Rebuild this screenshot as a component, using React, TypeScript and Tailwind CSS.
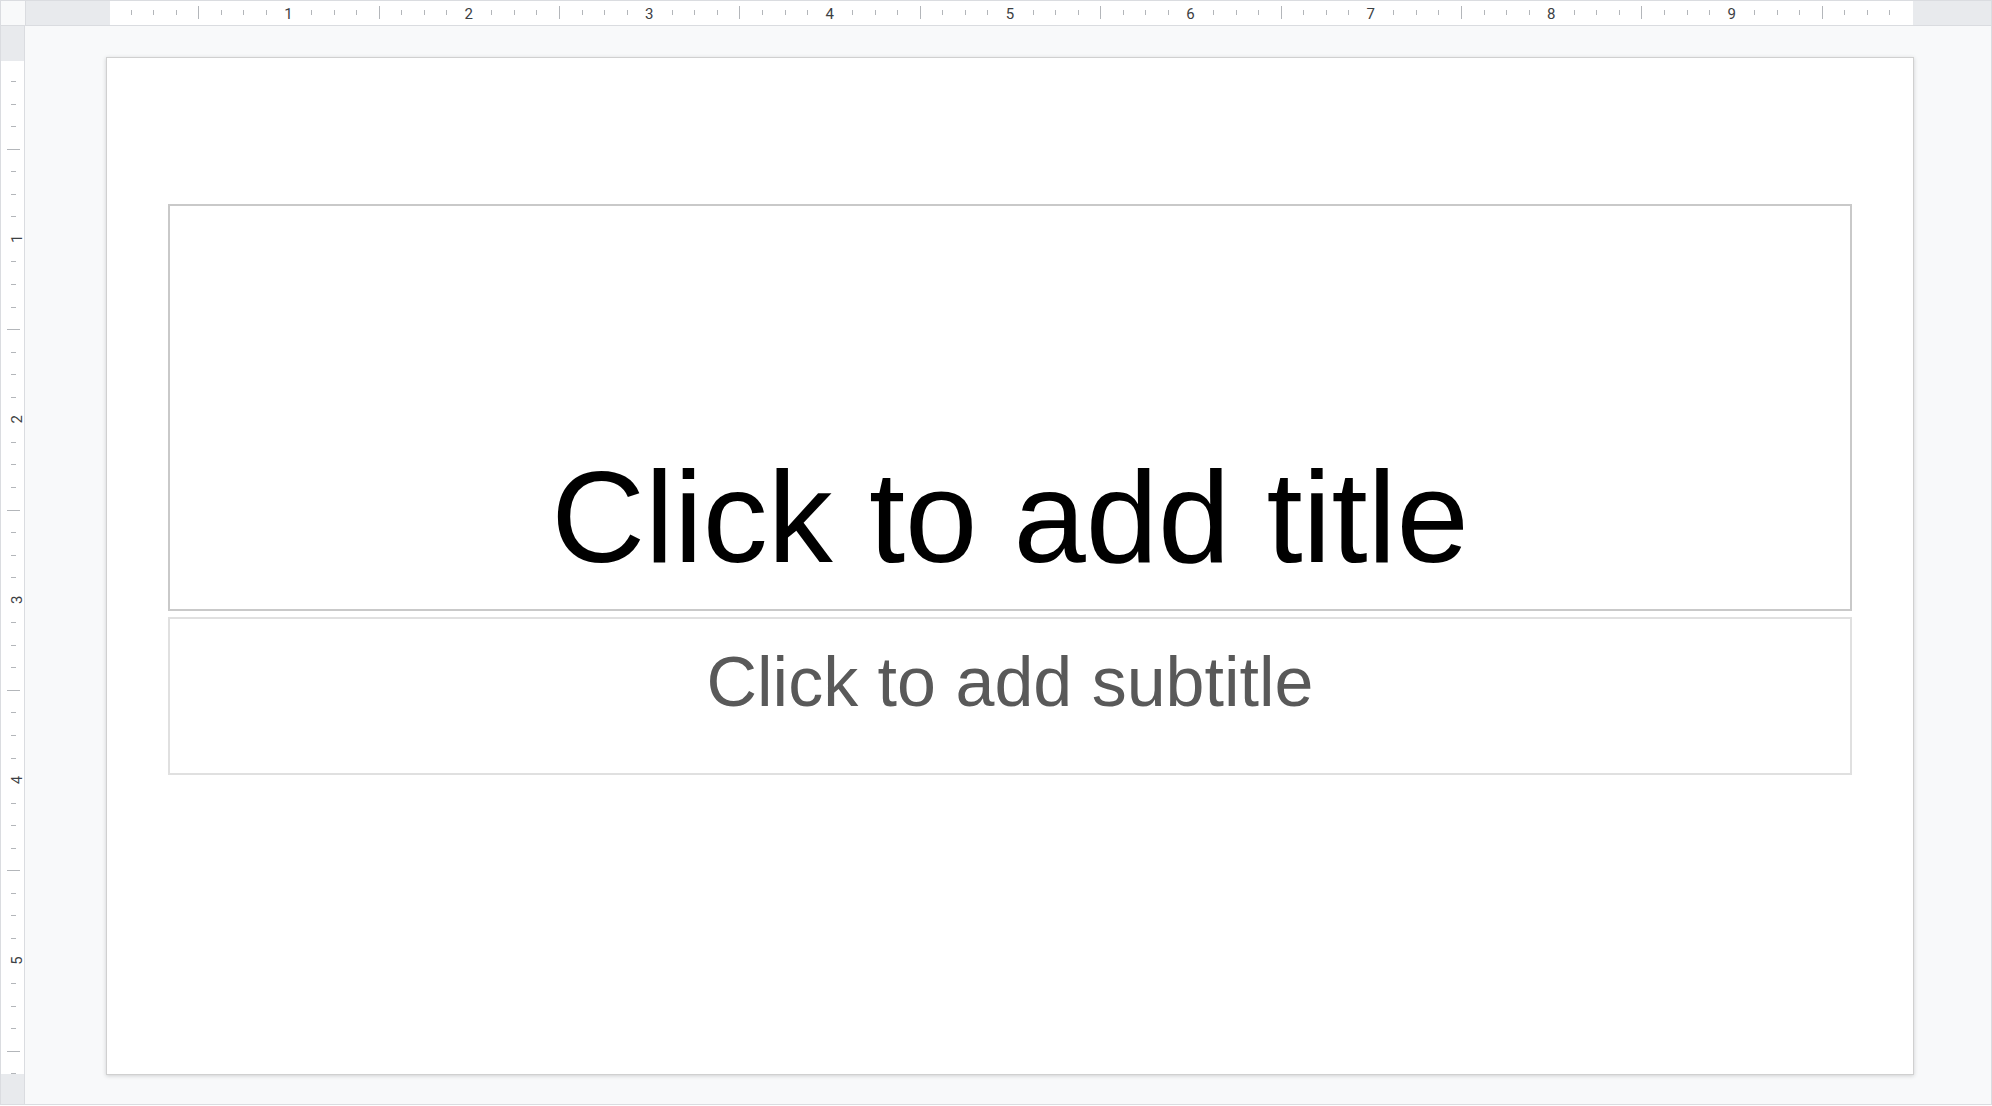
const INCH = 180.4;
const EIGHTH = INCH / 8;

function TopRuler() {
  const ticks = Array.from({ length: 79 }, (_, i) => i + 1);
  return (
    <div className="relative h-full flex-1 bg-[#e8eaed]">
      <div className="ml-[84px] h-full w-[1803px] bg-white" />
      <svg className="absolute left-0 top-0" width="1965" height="24">
        {ticks.map((k) => {
          if (k % 8 === 0) return null;
          const x = Math.round(82 + k * EIGHTH) + 0.5;
          const long = k % 4 === 0;
          return (
            <line
              key={k}
              x1={x}
              x2={x}
              y1={long ? 5 : 9}
              y2={long ? 18 : 14}
              stroke="#b3b6ba"
              strokeWidth="1"
            />
          );
        })}
        {[1, 2, 3, 4, 5, 6, 7, 8, 9].map((n) => (
          <text
            key={n}
            x={82 + n * INCH}
            y={18}
            textAnchor="middle"
            fontFamily="Roboto, 'Liberation Sans', sans-serif"
            fontSize="15"
            fill="#3c4043"
          >
            {n}
          </text>
        ))}
      </svg>
    </div>
  );
}

function LeftRuler() {
  const ticks = Array.from({ length: 45 }, (_, i) => i + 1);
  return (
    <div className="relative flex w-[24px] flex-col border-r border-[#dadce0] bg-[#e8eaed]">
      <div className="h-[35px]" />
      <div className="h-[1013px] bg-white" />
      <svg className="absolute left-0 top-0" width="24" height="1080">
        {ticks.map((k) => {
          if (k % 8 === 0) return null;
          const y = Math.round(32.5 + k * EIGHTH) + 0.5;
          const long = k % 4 === 0;
          return (
            <line
              key={k}
              x1={long ? 6 : 10}
              x2={long ? 19 : 15}
              y1={y}
              y2={y}
              stroke="#b3b6ba"
              strokeWidth="1"
            />
          );
        })}
        {[1, 2, 3, 4, 5].map((n) => (
          <text
            key={n}
            transform={`translate(20.5 ${32.5 + n * INCH}) rotate(-90)`}
            textAnchor="middle"
            fontFamily="Roboto, 'Liberation Sans', sans-serif"
            fontSize="15"
            fill="#3c4043"
          >
            {n}
          </text>
        ))}
      </svg>
    </div>
  );
}

export default function App() {
  return (
    <div className="h-[1106px] w-[1992px] bg-white">
      <div className="flex h-[1105px] w-[1992px] flex-col border border-[#dadce0] bg-[#f8f9fa]">
        {/* ruler row */}
        <div className="flex h-[25px] border-b border-[#dadce0]">
          <div className="h-full w-[25px] border-r border-[#dadce0] bg-[#f8f9fa]" />
          <TopRuler />
        </div>

        <div className="flex flex-1 overflow-hidden">
          <LeftRuler />

          {/* canvas */}
          <div className="flex-1 bg-[#f8f9fa] pl-[81px] pt-[31px]">
            <div className="flex h-[1018px] w-[1808px] flex-col items-center border border-[#d0d0d0] bg-white pt-[146px] shadow-[0_1px_4px_rgba(60,64,67,0.22)]">
              <div className="flex h-[407px] w-[1684px] items-end justify-center border-2 border-[#c9c9c9] pb-[17px]">
                <span
                  className="text-[130px] leading-[1.15] text-black"
                  style={{ fontFamily: "'Liberation Sans', Arial, sans-serif" }}
                >
                  Click to add title
                </span>
              </div>
              <div className="mt-[6px] flex h-[158px] w-[1684px] justify-center border-2 border-[#e0e0e0] pt-[23px]">
                <span
                  className="text-[70px] leading-[1.15] text-[#595959]"
                  style={{ fontFamily: "'Liberation Sans', Arial, sans-serif" }}
                >
                  Click to add subtitle
                </span>
              </div>
            </div>
          </div>
        </div>
      </div>
    </div>
  );
}
